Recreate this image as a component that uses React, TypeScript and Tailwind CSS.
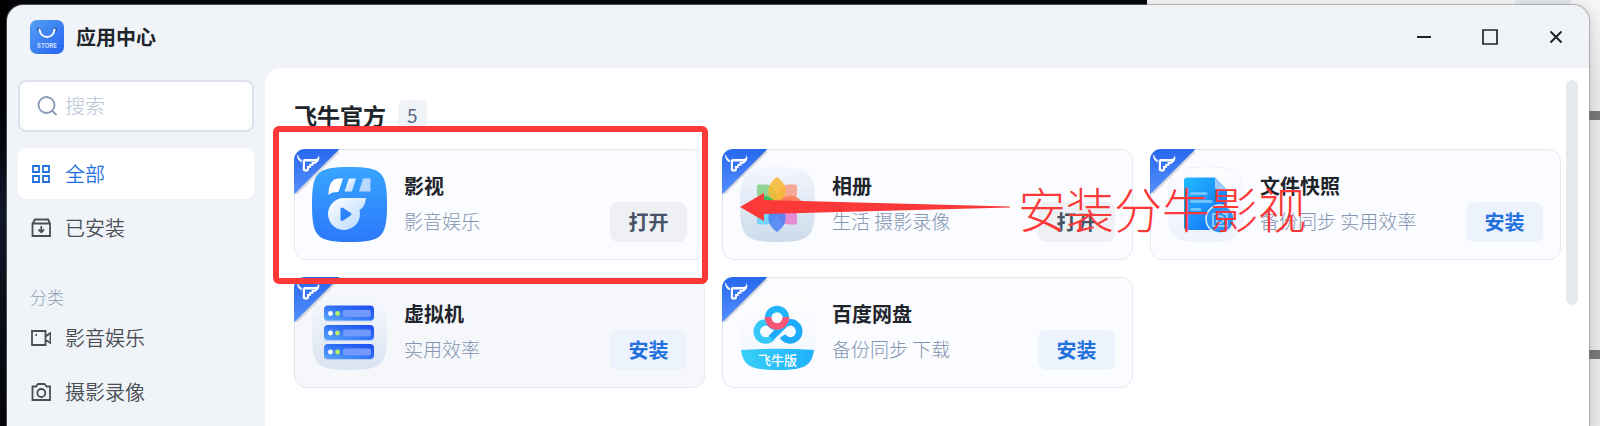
import type { ReactNode } from "react";

interface AppItem {
  name: string;
  tags: string;
  action: "打开" | "安装";
  icon: ReactNode;
  active?: boolean;
  marked?: boolean;
  note?: string;
}

const squircle = "M0 37.5C0 5 5 0 37.5 0S75 5 75 37.5 70 75 37.5 75 0 70 0 37.5Z";

function StoreLogo() {
  return (
    <svg viewBox="0 0 34 34" className="size-[34px]">
      <defs>
        <linearGradient id="store" x1="0" y1="0" x2="1" y2="1">
          <stop offset="0" stopColor="#55a0f3" />
          <stop offset="1" stopColor="#2563f0" />
        </linearGradient>
      </defs>
      <rect width="34" height="34" rx="7" fill="url(#store)" />
      <path d="M7.5 10.5V9.5a1.6 1.6 0 0 1 3 0M23.5 9.5a1.6 1.6 0 0 1 3 0v1" fill="none" stroke="#1b3f91" strokeWidth="1.2" />
      <path d="M9.5 9.5C10.5 19.5 23.5 19.5 24.5 9.5" fill="none" stroke="#fff" strokeWidth="2" strokeLinecap="round" />
      <text x="17" y="28" textAnchor="middle" fontSize="6" fontWeight="600" fill="#dbe8ff" fontFamily="Inter, sans-serif">
        STORE
      </text>
    </svg>
  );
}

function MovieIcon() {
  return (
    <svg viewBox="0 0 75 75" className="size-[75px]">
      <defs>
        <linearGradient id="movie" x1="0" y1="0" x2="0" y2="1">
          <stop offset="0" stopColor="#38a5ff" />
          <stop offset="1" stopColor="#2b78fb" />
        </linearGradient>
        <linearGradient id="movieWhite" x1="0" y1="0" x2="1" y2="1">
          <stop offset="0" stopColor="#fff" />
          <stop offset="1" stopColor="#b5d6ff" />
        </linearGradient>
      </defs>
      <path d={squircle} fill="url(#movie)" />
      <path d="M16.5 27C16.5 18 20 12 26 11.5h5L27 23.5Q26.5 25 25 25C21 25 18.500 26 16.500 28Z" fill="#fff" />
      <path d="M37 11.5h7L40 24.5h-7.5Z" fill="url(#movieWhite)" />
      <path d="M51 11.5h7.5v13H47Z" fill="#b9d8ff" />
      <path d="M32 31H54Q53 40 47.5 43A16 16 0 1 1 32 31Z" fill="url(#movieWhite)" />
      <path d="M30 42l8 5.2-8 5.3Z" fill="#2d83fb" stroke="#2d83fb" strokeWidth="3" strokeLinejoin="round" />
    </svg>
  );
}

function AlbumIcon() {
  const petals = [
    { angle: 0, color: "#f8b830" },
    { angle: 90, color: "#ff7550" },
    { angle: 180, color: "#4a7ff5" },
    { angle: 270, color: "#35b54c" },
  ];
  const leaves = [
    { angle: 0, color: "#f7a189" },
    { angle: 90, color: "#e583cf" },
    { angle: 180, color: "#6cd2fa" },
    { angle: 270, color: "#86ce86" },
  ];
  return (
    <svg viewBox="0 0 75 75" className="size-[75px]">
      <defs>
        <linearGradient id="album" x1="0" y1="0" x2="0" y2="1">
          <stop offset="0" stopColor="#f3f6fe" />
          <stop offset="1" stopColor="#cddbea" />
        </linearGradient>
      </defs>
      <path d={squircle} fill="url(#album)" />
      <g transform="translate(37 37.5)">
        {leaves.map((leaf) => (
          <path key={leaf.color} d="M0 0V-8Q2-20 12-20H18Q20-20 20-18V-12Q20-2 8 0Z" fill={leaf.color} opacity="0.9" transform={`rotate(${leaf.angle})`} />
        ))}
        {petals.map((petal) => (
          <path key={petal.color} d="M0 0C-12-8-11-20 0-27.5C11-20 12-8 0 0Z" fill={petal.color} opacity="0.85" transform={`rotate(${petal.angle})`} />
        ))}
      </g>
    </svg>
  );
}

function SnapshotIcon() {
  return (
    <svg viewBox="0 0 75 75" className="size-[75px]">
      <defs>
        <linearGradient id="snapBg" x1="0" y1="0" x2="0" y2="1">
          <stop offset="0" stopColor="#fdfdff" />
          <stop offset="1" stopColor="#eef2fe" />
        </linearGradient>
        <linearGradient id="snap" x1="0" y1="0" x2="1" y2="1">
          <stop offset="0" stopColor="#1fbcfc" />
          <stop offset="1" stopColor="#1767fa" />
        </linearGradient>
      </defs>
      <path d={squircle} fill="url(#snapBg)" stroke="#eef1fa" />
      <path d="M19 10.5H47L59 23V63H19a3 3 0 0 1-3-3V13.5a3 3 0 0 1 3-3Z" fill="url(#snap)" />
      <path d="M47 10.5L59 23H50a3 3 0 0 1-3-3Z" fill="#9fcbff" />
      <path d="M23.5 26.5H38M23.5 34.5H43M23.5 42.5H32" stroke="#6fc3ff" strokeWidth="3" strokeLinecap="round" />
      <circle cx="52" cy="52" r="14" fill="#2a93fb" stroke="#d9f0ff" strokeWidth="1.5" />
      <path d="M45 47h3l1.5-2h5l1.5 2h3v12H45Z" fill="none" stroke="#a6dcff" strokeWidth="1.5" />
      <circle cx="52" cy="52.5" r="3.5" fill="none" stroke="#a6dcff" strokeWidth="1.5" />
    </svg>
  );
}

function VmIcon() {
  return (
    <svg viewBox="0 0 75 75" className="size-[75px]">
      <defs>
        <linearGradient id="vmBg" x1="0" y1="0" x2="0" y2="1">
          <stop offset="0" stopColor="#f6f8fd" />
          <stop offset="1" stopColor="#d9e3f1" />
        </linearGradient>
        <linearGradient id="vm" x1="0" y1="1" x2="1" y2="0">
          <stop offset="0" stopColor="#59a8fb" />
          <stop offset="0.6" stopColor="#2d69f5" />
          <stop offset="1" stopColor="#1d4df0" />
        </linearGradient>
      </defs>
      <path d={squircle} fill="url(#vmBg)" />
      {[10.5, 30, 49].map((y) => (
        <g key={y} transform={`translate(12 ${y})`}>
          <rect y="1" width="50" height="15" rx="4" fill="#b5cbf4" />
          <rect width="50" height="15" rx="4" fill="url(#vm)" />
          <circle cx="6.5" cy="8" r="2.4" fill="#fff" />
          <circle cx="13.5" cy="8" r="2.4" fill="#b9f06a" />
          <rect x="19" y="4.5" width="28" height="7" rx="2" fill="#7199fb" />
        </g>
      ))}
    </svg>
  );
}

function NetdiskIcon() {
  return (
    <svg viewBox="0 0 75 75" className="size-[75px]">
      <defs>
        <linearGradient id="diskBg" x1="0" y1="0" x2="0" y2="1">
          <stop offset="0" stopColor="#fefeff" />
          <stop offset="1" stopColor="#f1f5ff" />
        </linearGradient>
        <linearGradient id="disk" x1="0" y1="0" x2="1" y2="0">
          <stop offset="0" stopColor="#38d0f8" />
          <stop offset="1" stopColor="#1fb2fd" />
        </linearGradient>
        <clipPath id="diskClip">
          <path d={squircle} />
        </clipPath>
      </defs>
      <path d={squircle} fill="url(#diskBg)" />
      <g fill="none" strokeWidth="6.5">
        <circle cx="37" cy="23" r="9" stroke="#22b4fa" />
        <path d="M32 43A9 9 0 1 1 26 27.500C31 27.500 33.500 31 37 34" stroke="#36c9f8" />
        <path d="M31 43L43 31A9 9 0 1 1 42.500 41" stroke="#1cacfb" />
        <path d="M28 22a9 9.500 0 0 0 18 0" stroke="#fb5575" />
      </g>
      <path d="M0 55Q37 52.5 75 55V75H0Z" fill="url(#disk)" clipPath="url(#diskClip)" />
      <text x="37.5" y="69.5" textAnchor="middle" fontSize="13" fontWeight="500" fill="#fff" fontFamily="'Noto Sans CJK SC', sans-serif">
        飞牛版
      </text>
    </svg>
  );
}

function Ribbon() {
  return (
    <svg viewBox="0 0 48 48" className="absolute -left-px -top-px size-12">
      <defs>
        <linearGradient id="ribbon" x1="0" y1="0" x2="0" y2="1">
          <stop offset="0" stopColor="#2767ee" />
          <stop offset="1" stopColor="#5690ff" />
        </linearGradient>
      </defs>
      <path d="M2 44.5L44.5 2" stroke="#8b9099" strokeOpacity="0.35" strokeWidth="3" />
      <path d="M0 45.5V11A11 11 0 0 1 11 0H45.5Z" fill="url(#ribbon)" />
      <g fill="#fff">
        <path d="M3.6 6C3.2 9.500 5 12.500 8 12.800L7.200 10.800C5.600 10 4.400 8.500 3.600 6Z" stroke="#fff" strokeWidth="0.6" />
        <path d="M24.500 6C24.500 8.500 23.500 10 21 10H11Q8.800 10 8.800 12V20.500Q8.800 22.500 10.800 22.500H13.500L15 21V18.800H17V16.800H19.500V14.800H21.500L24 12.600C25.600 11 25.800 8.500 24.500 6ZM11 12.500H21L20.500 13H17.500V15H15.300V17H13V20.300H11Z" fillRule="evenodd" />
      </g>
    </svg>
  );
}

const apps: AppItem[] = [
  { name: "影视", tags: "影音娱乐", action: "打开", icon: <MovieIcon />, marked: true },
  { name: "相册", tags: "生活 摄影录像", action: "打开", icon: <AlbumIcon />, note: "安装分牛影视" },
  { name: "文件快照", tags: "备份同步 实用效率", action: "安装", icon: <SnapshotIcon /> },
  { name: "虚拟机", tags: "实用效率", action: "安装", icon: <VmIcon />, active: true },
  { name: "百度网盘", tags: "备份同步 下载", action: "安装", icon: <NetdiskIcon /> },
];

function AppCard({ app }: { app: AppItem }) {
  return (
    <article
      className={`relative flex h-[111px] items-center rounded-xl border border-[#e3e9f2] px-[17px] ${
        app.active ? "bg-[#f5f7fb]" : "bg-[#fbfcff]"
      }`}
    >
      <Ribbon />
      <div className="relative shrink-0">{app.icon}</div>
      <div className="mb-1 ml-[17px] min-w-0 flex-1 whitespace-nowrap">
        <h3 className="text-[20px] font-bold leading-[35px] text-[#20242b]">{app.name}</h3>
        <p className="text-[19px] font-light leading-[35px] text-[#8394b0]">{app.tags}</p>
      </div>
      <button
        type="button"
        className={`mb-[17px] h-10 w-[77px] shrink-0 self-end rounded-lg text-[20px] font-bold ${
          app.action === "打开" ? "bg-[#eff0f4] text-[#475467]" : "bg-[#ecf3fd] text-[#2070df]"
        }`}
      >
        {app.action}
      </button>

      {app.marked && (
        <div className="pointer-events-none absolute -bottom-[25px] -left-[22px] -right-1 -top-6 z-10 rounded-md border-6 border-[#fc3838]" />
      )}
      {app.note && (
        <div className="pointer-events-none absolute left-[17px] top-[21px] z-10 flex items-center gap-2 whitespace-nowrap">
          <svg viewBox="0 0 270 28" className="h-7 w-[270px]" fill="#fc3838">
            <path d="M0 14L24 0V7L270 13.5V14.5L24 21V28Z" />
          </svg>
          <span className="text-[48px] font-light leading-[72px] text-[#fc3838]">{app.note}</span>
        </div>
      )}
    </article>
  );
}

function NavItem({ label, selected, children }: { label: string; selected?: boolean; children: ReactNode }) {
  return (
    <a
      href="#"
      className={`flex h-[51px] items-center gap-[14px] rounded-lg px-[13px] text-[20px] ${
        selected ? "bg-white text-[#2070df]" : "text-[#494d54]"
      }`}
    >
      <svg viewBox="0 0 20 20" className="size-5 shrink-0" fill="none" stroke="currentColor" strokeWidth="1.8">
        {children}
      </svg>
      <span className="font-[350]">{label}</span>
    </a>
  );
}

function Sidebar() {
  return (
    <aside className="w-[258px] shrink-0 px-[11px] pt-3">
      <label className="flex h-[52px] items-center gap-2 rounded-lg border-2 border-[#dbe2ec] bg-white px-[17px]">
        <svg viewBox="0 0 20 20" className="size-5 shrink-0" fill="none" stroke="#8799b3" strokeWidth="1.8">
          <circle cx="9.5" cy="9" r="8" />
          <path d="M15 14.5L19.500 19" />
        </svg>
        <input
          type="search"
          aria-label="搜索"
          placeholder="搜索"
          className="w-full min-w-0 bg-transparent text-[20px] font-light outline-none placeholder:text-[#b8c3d3]"
        />
      </label>
      <nav className="mt-4 flex flex-col gap-[3px]">
        <NavItem label="全部" selected>
          <path d="M2 2h6v6H2ZM12 2h6v6h-6ZM2 12h6v6H2ZM12 12h6v6h-6Z" />
        </NavItem>
        <NavItem label="已安装">
          <path d="M1.5 5.5L4 1.5H17L19 5.5V18H1.5ZM1.5 5.5H19M10.3 8V14M7.5 11.5l2.8 2.8 2.8-2.8" />
        </NavItem>
        <h2 className="mt-[29px] px-3 text-[17px] font-light leading-6 text-[#8d9fba]">分类</h2>
        <NavItem label="影音娱乐">
          <path d="M1 3h13.5v14H1ZM14.5 8.5L19.5 5v10l-5-3.5M4.5 7h1.5" />
        </NavItem>
        <NavItem label="摄影录像">
          <path d="M1.5 4.5H5L7 2H13.5L15.5 4.5H19V18H1.5Z" />
          <circle cx="10.3" cy="11" r="4" />
        </NavItem>
      </nav>
    </aside>
  );
}

function TitleBar() {
  return (
    <header className="flex h-[63px] shrink-0 items-center justify-between pl-[23px] pr-[25px]">
      <div className="flex items-center gap-3">
        <StoreLogo />
        <h1 className="text-[20px] font-bold text-[#20242b]">应用中心</h1>
      </div>
      <div className="flex gap-[50px] text-[#20242b]">
        <button type="button" aria-label="最小化">
          <svg viewBox="0 0 16 16" className="size-4" stroke="currentColor" strokeWidth="2">
            <path d="M1 8h14" />
          </svg>
        </button>
        <button type="button" aria-label="最大化">
          <svg viewBox="0 0 16 16" className="size-4" fill="none" stroke="currentColor" strokeWidth="1.7">
            <path d="M1 1h14v14H1Z" />
          </svg>
        </button>
        <button type="button" aria-label="关闭">
          <svg viewBox="0 0 16 16" className="size-4" stroke="currentColor" strokeWidth="2">
            <path d="M2.5 2.5l11 11M13.5 2.5l-11 11" />
          </svg>
        </button>
      </div>
    </header>
  );
}

function App() {
  return (
    <div className="relative flex h-screen overflow-hidden bg-[#05060c] pl-[7px] pr-[11px] pt-[5px] font-['Noto_Sans_CJK_SC',sans-serif]">
      {/* desktop behind the window */}
      <div className="absolute inset-y-0 left-0 w-2 bg-linear-to-b from-black via-[#11182a] to-[#05060a]" />
      <div className="absolute inset-y-0 right-0 w-[453px] bg-linear-to-b from-[#f5f5f5] to-[#e8e8e8] to-20%">
        <div className="absolute -top-2 right-[29px] h-6 w-14 rounded-full bg-[#e4e8eb]" />
        <div className="absolute right-0 top-[111px] h-[9px] w-3 bg-[#777]" />
        <div className="absolute right-0 top-[350px] h-[9px] w-3 bg-[#777]" />
      </div>

      <div className="relative flex min-w-0 flex-1 flex-col overflow-hidden rounded-t-2xl bg-[#f0f4f9] shadow-[0_0_0_1px_#8888,0_2px_12px_#0003]">
        <TitleBar />
        <div className="flex min-h-0 flex-1">
          <Sidebar />
          <main className="relative min-w-0 flex-1 rounded-tl-2xl bg-white pl-[29px] pr-7 pt-[30px]">
            <div className="mb-[17px] flex h-[34px] items-center gap-3">
              <h2 className="text-[23px] font-bold text-[#20242b]">飞牛官方</h2>
              <span className="rounded-md bg-[#f0f4f9] px-[9px] text-[19px] leading-[30px] text-[#5b6880]">5</span>
            </div>
            <div className="grid grid-cols-3 gap-[17px]">
              {apps.map((app) => (
                <AppCard key={app.name} app={app} />
              ))}
            </div>
            <div className="absolute right-[11px] top-3 h-[225px] w-3 rounded-full bg-[#e6eaed]" />
          </main>
        </div>
      </div>
    </div>
  );
}

export default App;
